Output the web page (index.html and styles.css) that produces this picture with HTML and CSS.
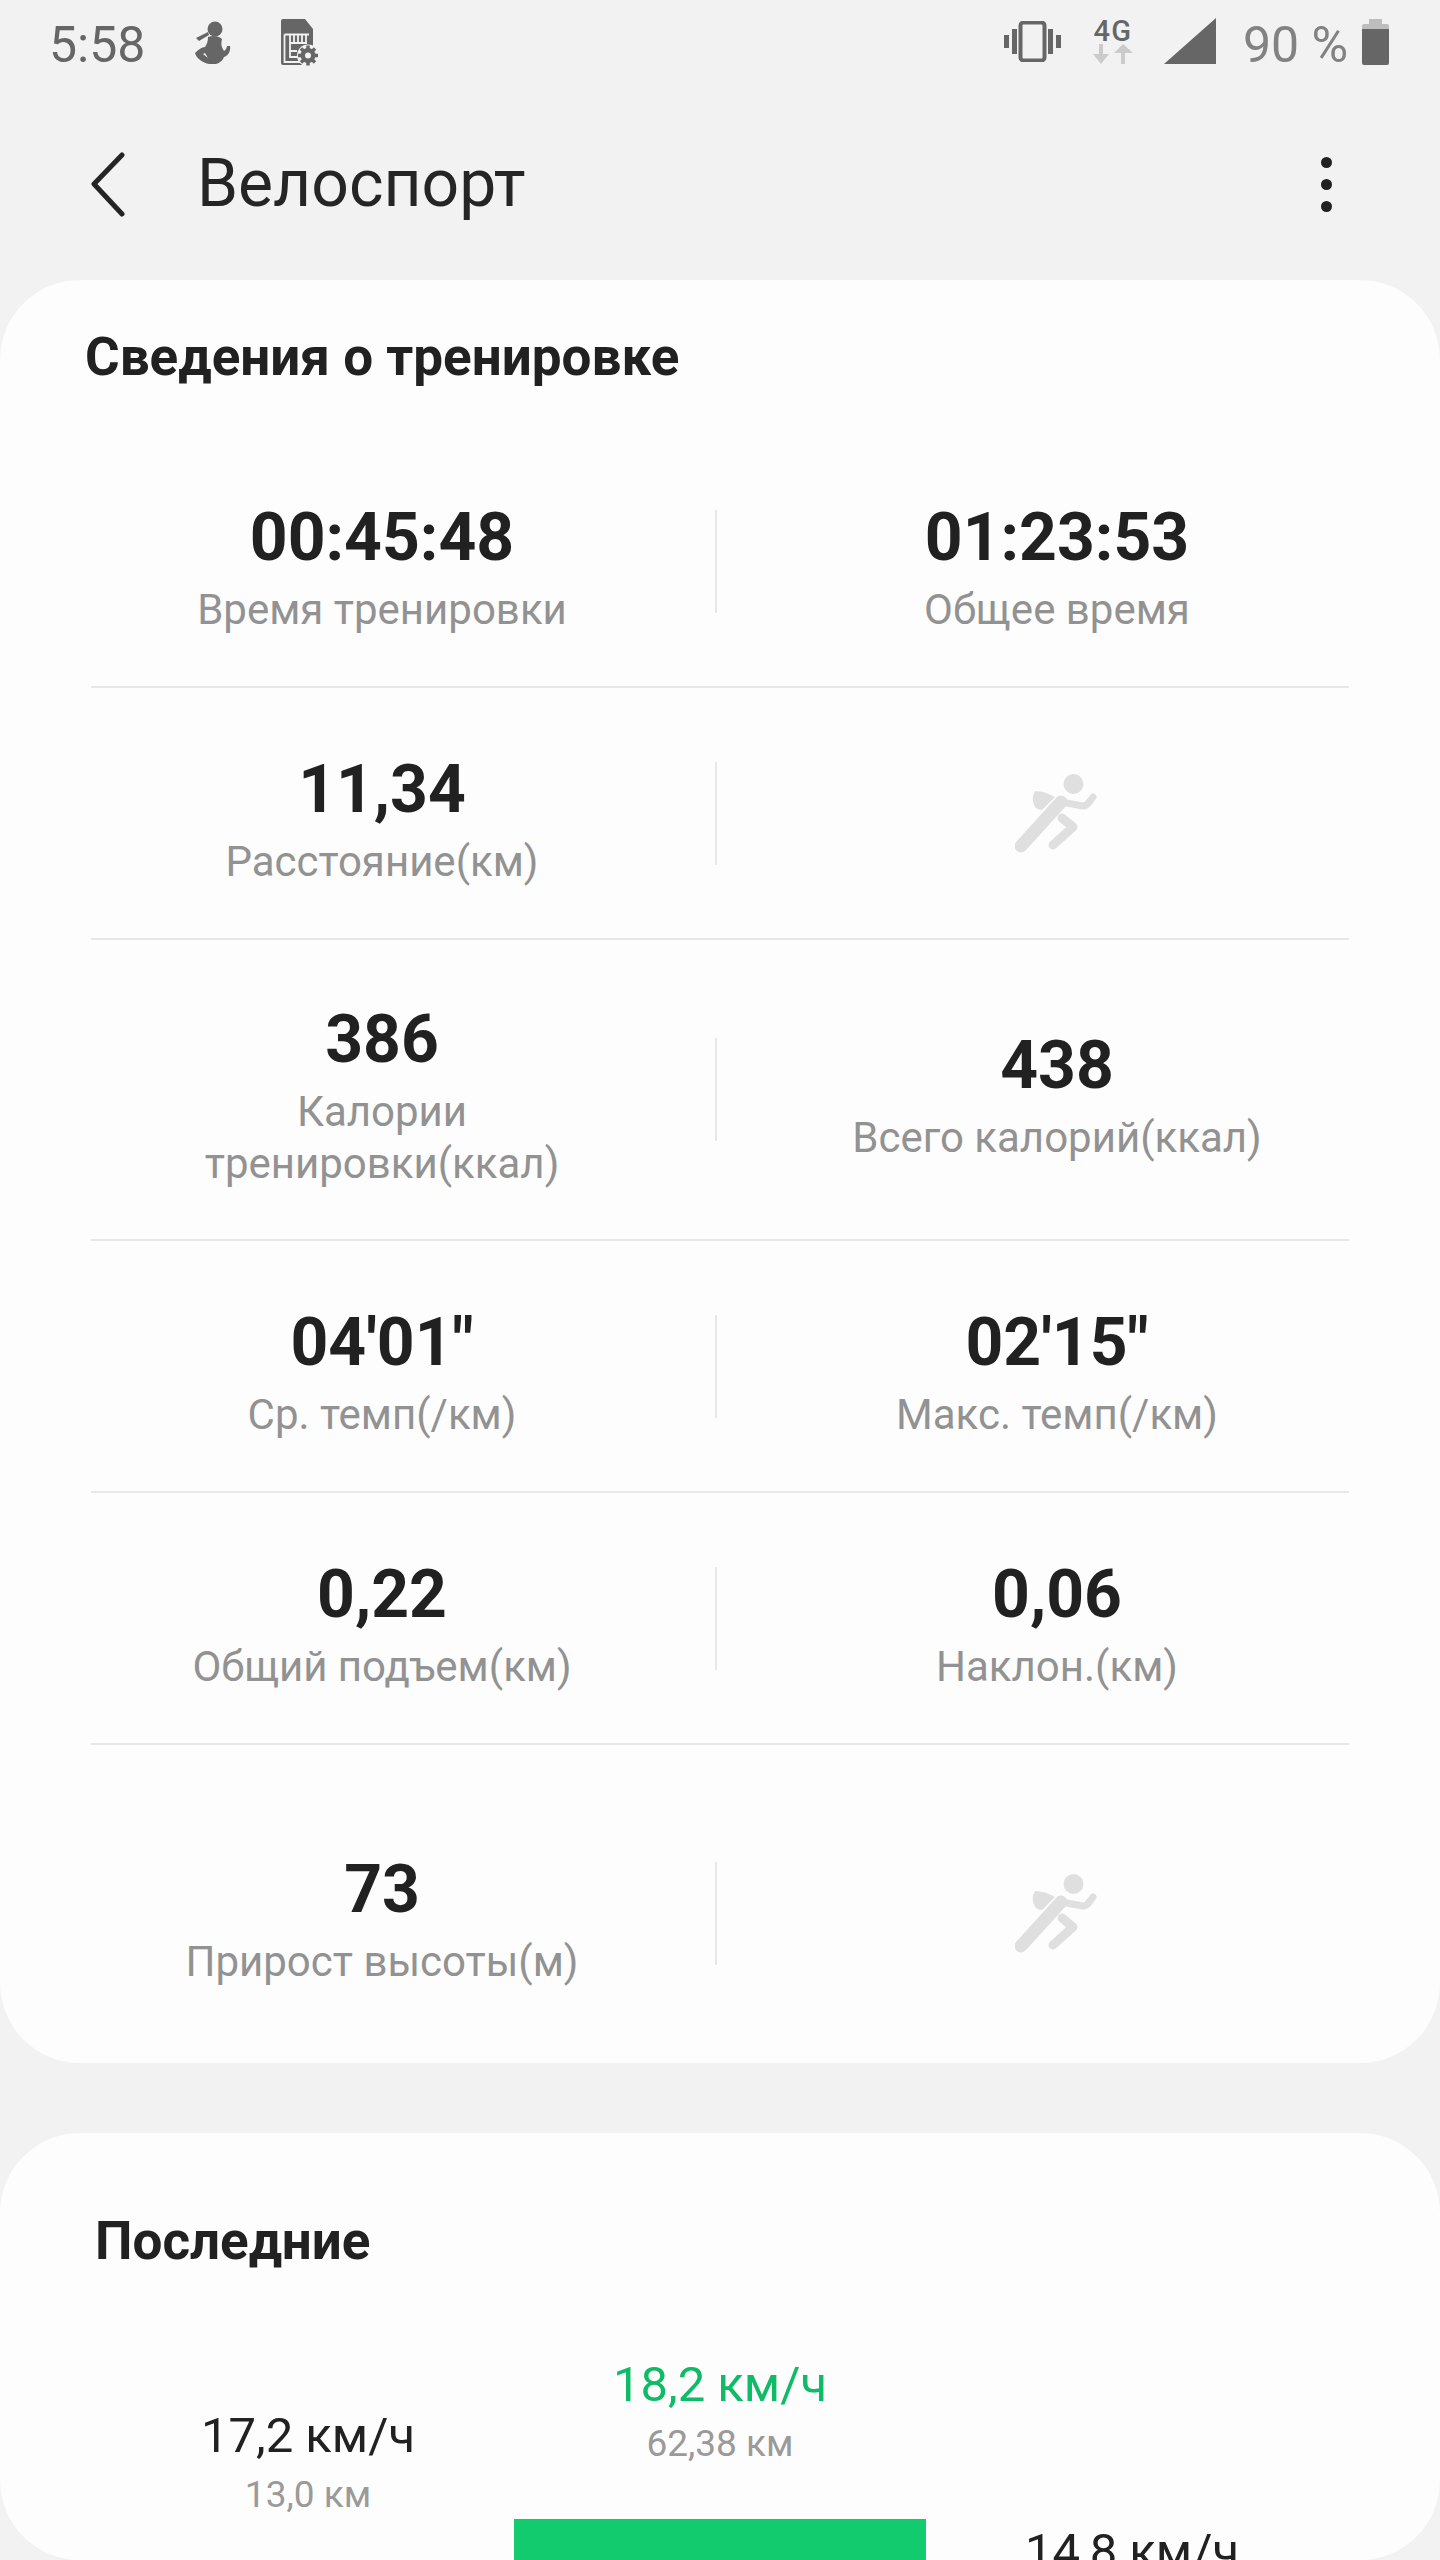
FILE: index.html
```html
<!DOCTYPE html>
<html lang="ru">
<head>
<meta charset="utf-8">
<title>Велоспорт</title>
<link rel="stylesheet" href="styles.css">
</head>
<body>
<svg class="defs" width="0" height="0" aria-hidden="true">
  <symbol id="runner" viewBox="0 0 85 79">
    <circle cx="58.500" cy="10" r="10" fill="#dfdfdf"/>
    <path d="M20 17 C27 17 33 19 40 23 L27 36 C24 36 22 35 20 33 C18 28 16 24 20 17 Z" fill="#dfdfdf"/>
    <path d="M46 28 L6 72" stroke="#dfdfdf" stroke-width="13" stroke-linecap="round" fill="none"/>
    <path d="M46 28 L68 32 C71 32 73 30 75 27 L78 23" stroke="#dfdfdf" stroke-width="7" stroke-linecap="round" stroke-linejoin="round" fill="none"/>
    <path d="M47 44 L58 53 L38 71" stroke="#dfdfdf" stroke-width="9" stroke-linecap="round" stroke-linejoin="round" fill="none"/>
  </symbol>
</svg>

<div class="status">
  <span class="clock">5:58</span>
  <svg class="ic-run" viewBox="0 0 38 43">
    <circle cx="21" cy="8" r="7.500" fill="#666"/>
    <path d="M2 17 L14 11 L15 14 L5 20 Z" fill="#666"/>
    <path d="M14 16 C19 14 25 15 28 18 C27 23 27 25 30 30 C32 29 33 26 33 25 L36 25 C37 30 34 35 30 36 C29 39 26 42 22 43 L15 43 C9 42 2 37 1 32 C4 29 8 26 11 26 C13 23 14 20 14 16 Z M11 32 L9 33 L14 37 Z" fill="#666" fill-rule="evenodd"/>
  </svg>
  <svg class="ic-sim" viewBox="0 0 37 47">
    <path d="M2 0 H24 L32 10 V44 A2 2 0 0 1 30 46 H2 A2 2 0 0 1 0 44 V2 A2 2 0 0 1 2 0 Z" fill="#666"/>
    <path d="M3.500 15.500 H28 M3.500 15.500 V43 H20 M9 15.500 V38 H18 M13 16 V24 M17 16 V24 M21 16 V24 M25 16 V24 M9 24 H26 M9 32 H16" stroke="#f2f2f2" stroke-width="1.800" fill="none"/>
    <circle cx="27" cy="36.500" r="11" fill="#f2f2f2"/>
    <path d="M27 26.500 V46.500 M17 36.500 H37 M20 29.500 L34 43.500 M34 29.500 L20 43.500" stroke="#666" stroke-width="3.500"/>
    <circle cx="27" cy="36.500" r="7.500" fill="#666"/>
    <circle cx="27" cy="36.500" r="3" fill="#f2f2f2"/>
  </svg>
  <span class="status-gap"></span>
  <svg class="ic-vib" viewBox="0 0 57 41">
    <rect x="16.500" y="1.500" width="24" height="38" rx="3" fill="none" stroke="#666" stroke-width="4"/>
    <path d="M0 14 H5 V27 H0 Z M8 8 H13 V33 H8 Z M44 8 H49 V33 H44 Z M52 14 H57 V27 H52 Z" fill="#666"/>
  </svg>
  <div class="net">
    <span class="net-label">4G</span>
    <svg class="net-arrows" viewBox="0 0 44 20">
      <path d="M8 0 H12 V10 H18 L10 20 L2 10 H8 Z M30 20 H34 V9 H42 L32 0 L23 9 H30 Z" fill="#cbcbcb"/>
    </svg>
  </div>
  <svg class="ic-signal" viewBox="0 0 52 46"><path d="M0 46 L52 0 V46 Z" fill="#666"/></svg>
  <span class="pct">90 %</span>
  <svg class="ic-batt" viewBox="0 0 27 46">
    <path d="M7 0 H20 V5 H25 A2 2 0 0 1 27 7 V10 H0 V7 A2 2 0 0 1 2 5 H7 Z" fill="#bdbdbd"/>
    <path d="M0 10 H27 V44 A2 2 0 0 1 25 46 H2 A2 2 0 0 1 0 44 Z" fill="#666"/>
  </svg>
</div>

<header class="appbar">
  <svg class="ic-back" viewBox="0 0 36 65"><path d="M32 3 L4 32 L32 62" fill="none" stroke="#252525" stroke-width="5" stroke-linecap="round" stroke-linejoin="round"/></svg>
  <h1 class="page-title">Велоспорт</h1>
  <div class="more"><i class="dot"></i><i class="dot"></i><i class="dot"></i></div>
</header>

<section class="card card-stats">
  <h2 class="card-title">Сведения о тренировке</h2>

  <div class="row">
    <div class="cell cell-l"><div class="val">00:45:48</div><div class="lab">Время тренировки</div></div>
    <i class="vline"></i>
    <div class="cell cell-r"><div class="val">01:23:53</div><div class="lab">Общее время</div></div>
  </div>
  <div class="rule"></div>
  <div class="row">
    <div class="cell cell-l"><div class="val">11,34</div><div class="lab">Расстояние(км)</div></div>
    <i class="vline"></i>
    <div class="cell cell-r"><svg class="ic-runner"><use href="#runner"/></svg></div>
  </div>
  <div class="rule"></div>
  <div class="row row-tall">
    <div class="cell cell-l"><div class="val">386</div><div class="lab">Калории<br>тренировки(ккал)</div></div>
    <i class="vline"></i>
    <div class="cell cell-r"><div class="val">438</div><div class="lab">Всего калорий(ккал)</div></div>
  </div>
  <div class="rule"></div>
  <div class="row">
    <div class="cell cell-l"><div class="val">04'01"</div><div class="lab">Ср. темп(/км)</div></div>
    <i class="vline"></i>
    <div class="cell cell-r"><div class="val">02'15"</div><div class="lab">Макс. темп(/км)</div></div>
  </div>
  <div class="rule"></div>
  <div class="row">
    <div class="cell cell-l"><div class="val">0,22</div><div class="lab">Общий подъем(км)</div></div>
    <i class="vline"></i>
    <div class="cell cell-r"><div class="val">0,06</div><div class="lab">Наклон.(км)</div></div>
  </div>
  <div class="rule"></div>
  <div class="row row-last">
    <div class="cell cell-l"><div class="val">73</div><div class="lab">Прирост высоты(м)</div></div>
    <i class="vline"></i>
    <div class="cell cell-r"><svg class="ic-runner"><use href="#runner"/></svg></div>
  </div>
</section>

<section class="card card-recent">
  <h2 class="recent-title">Последние</h2>
  <div class="chart">
    <div class="col">
      <div class="speed">17,2 км/ч</div>
      <div class="dist">13,0 км</div>
      <div class="bar" style="height:330px"></div>
    </div>
    <div class="col col-best">
      <div class="speed">18,2 км/ч</div>
      <div class="dist">62,38 км</div>
      <div class="bar" style="height:381px"></div>
    </div>
    <div class="col">
      <div class="speed">14,8 км/ч</div>
      <div class="bar bar-nodist" style="height:214px"></div>
    </div>
  </div>
</section>
</body>
</html>
```
FILE: styles.css
```css
* { box-sizing: border-box; }
html, body { margin: 0; padding: 0; }
body {
  width: 1440px;
  height: 2560px;
  overflow: hidden;
  background: #f2f2f2;
  color: #212121;
  font-family: Roboto, "Noto Sans", sans-serif;
}
.defs { display: block; height: 0; }

.status {
  height: 88px;
  display: flex;
  align-items: center;
  padding: 0 51px 0 49px;
}
.clock { font-size: 50px; color: #666; line-height: 1; width: 145px; margin-top: 2px; }
.ic-run { width: 38px; height: 43px; margin-top: -4px; }
.ic-sim { width: 37px; height: 47px; margin-left: 49px; margin-top: -4px; }
.status-gap { flex: 1; }
.ic-vib { width: 57px; height: 41px; margin-top: -5px; }
.net { width: 44px; margin-left: 30px; display: flex; flex-direction: column; align-items: center; margin-top: -6px; }
.net-label { font-size: 29px; font-weight: 500; line-height: 24px; color: #666; letter-spacing: 1.500px; }
.net-arrows { width: 44px; height: 20px; margin-top: 1px; }
.ic-signal { width: 52px; height: 46px; margin-left: 29px; margin-top: -6px; }
.pct { font-size: 50px; color: #828282; line-height: 1; margin-left: 27px; width: 119px; margin-top: 2px; }
.ic-batt { width: 27px; height: 46px; margin-top: -4px; }

.appbar {
  height: 192px;
  display: flex;
  align-items: center;
  padding: 0 108px 0 90px;
}
.ic-back { width: 36px; height: 65px; }
.page-title { flex: 1; margin: 0 0 0 71px; font-size: 66px; font-weight: 400; line-height: 1; color: #252525; }
.more { display: flex; flex-direction: column; gap: 11px; }
.dot { display: block; width: 11px; height: 11px; border-radius: 50%; background: #212121; }

.card { background: #fdfdfd; border-radius: 80px; overflow: hidden; }
.card-stats { height: 1783px; }
.card-title { margin: 0; padding: 48px 0 0 85px; height: 156px; font-size: 53px; font-weight: 700; line-height: 58px; color: #212121; }

.row {
  height: 250px;
  display: flex;
  align-items: center;
  padding: 0 43px 0 49px;
}
.row-tall { height: 299px; }
.row-last { height: 318px; padding-top: 18px; }
.cell { display: flex; flex-direction: column; align-items: center; justify-content: center; text-align: center; }
.cell-l { width: 666px; }
.cell-r { flex: 1; }
.vline { display: block; width: 2px; height: 103px; background: #e8e8e8; flex: none; }
.rule { height: 2px; margin: 0 91px; background: #e8e8e8; }
.val { font-size: 66px; font-weight: 700; line-height: 78px; color: #212121; margin-top: 12px; }
.lab { font-size: 42px; line-height: 52px; color: #929292; margin-top: 7px; }
.ic-runner { width: 85px; height: 79px; }

.card-recent { margin-top: 70px; height: 427px; }
.recent-title { margin: 0; padding: 79px 0 0 95px; font-size: 53px; font-weight: 700; line-height: 58px; color: #212121; }
.chart {
  display: flex;
  align-items: flex-end;
  height: 630px;
  padding: 0 102px;
}
.col { width: 412px; display: flex; flex-direction: column; align-items: center; }
.speed { font-size: 49px; line-height: 58px; color: #212121; }
.dist { font-size: 37px; line-height: 46px; margin-top: 7px; color: #9a9a9a; }
.bar { width: 100%; margin-top: 52px; background: #13cb6f; }
.bar-nodist { margin-top: 105px; }
.col-best .speed { color: #0fbb67; }
```
